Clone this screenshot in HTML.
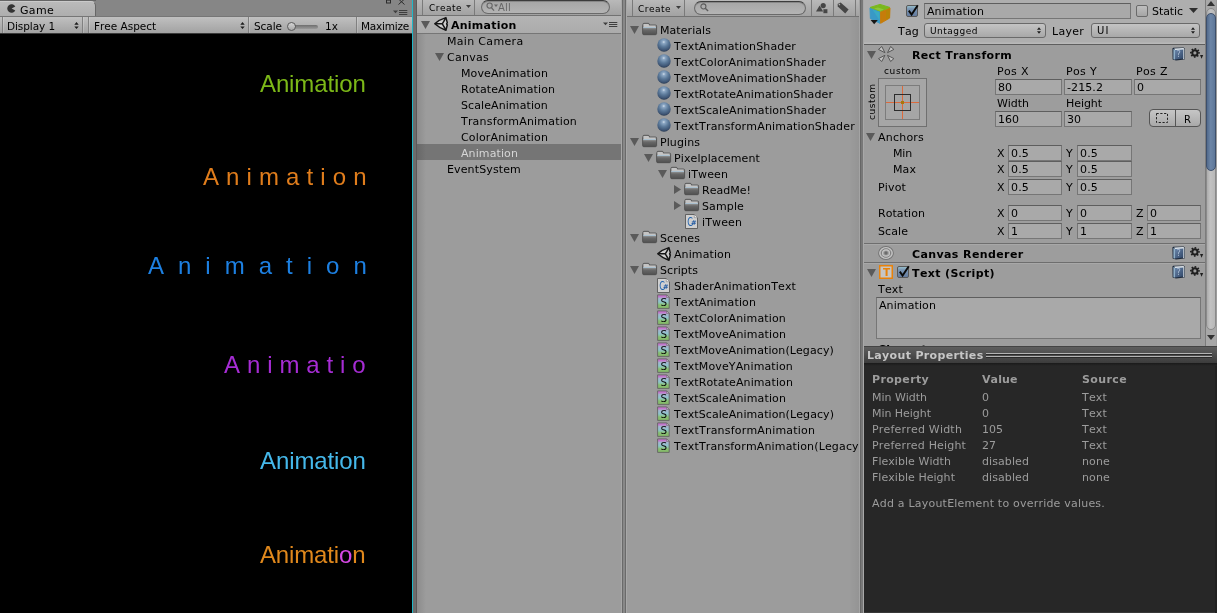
<!DOCTYPE html>
<html>
<head>
<meta charset="utf-8">
<title>Unity Editor</title>
<style>
html,body{margin:0;padding:0;}
body{width:1217px;height:613px;overflow:hidden;background:#9c9c9c;position:relative;
  font-family:"DejaVu Sans","Liberation Sans",sans-serif;font-size:11px;color:#000;font-kerning:none;font-variant-ligatures:none;}
div,span{box-sizing:border-box;}
#root{position:absolute;left:0;top:0;width:1217px;height:613px;overflow:hidden;will-change:transform;background:#9c9c9c;}
.abs{position:absolute;}
svg{display:block;overflow:visible;}
.t{position:absolute;white-space:pre;line-height:16px;height:16px;}
.b{font-weight:bold;}
.split{position:absolute;top:0;height:613px;width:6px;background:linear-gradient(90deg,#a8a8a8 0,#a8a8a8 1px,#6a6a6a 1px,#6a6a6a 2px,#888 2px,#888 4px,#6a6a6a 4px,#6a6a6a 5px,#a8a8a8 5px,#a8a8a8 6px);}
.split2{position:absolute;top:0;height:613px;width:5px;background:linear-gradient(90deg,#a4a4a4 0,#a4a4a4 1px,#666 1px,#666 2px,#787878 2px,#787878 4px,#a8a8a8 4px,#a8a8a8 5px);}
.tb{position:absolute;background:linear-gradient(#bcbcbc,#a2a2a2);border-bottom:1px solid #727272;}
.sep{position:absolute;width:1px;background:#7a7a7a;}
.search{position:absolute;border:1px solid #6a6a6a;border-top-color:#3c3c3c;box-shadow:inset 0 1px 0 rgba(0,0,0,.18);border-radius:8px;background:linear-gradient(#a6a6a6,#b4b4b4);}
.fld{position:absolute;height:16px;border:1px solid #767676;border-top-color:#5e5e5e;background:#a9a9a9;}
.dd{position:absolute;height:15px;border:1px solid #6a6a6a;border-radius:3px;background:linear-gradient(#c4c4c4,#a8a8a8);}
.game{font-family:"Liberation Sans",sans-serif;font-size:24px;position:absolute;white-space:pre;line-height:28px;}
.hl{position:absolute;height:1px;}
</style>
</head>
<body>
<div id="root">
<svg width="0" height="0" style="position:absolute">
<defs>
<linearGradient id="gFold" x1="0" y1="0" x2="0" y2="1"><stop offset="0" stop-color="#8a8a8a"/><stop offset="1" stop-color="#505050"/></linearGradient>
<radialGradient id="gBall" cx="0.48" cy="0.28" r="0.72"><stop offset="0" stop-color="#d2deea"/><stop offset="0.16" stop-color="#8ba6c3"/><stop offset="0.5" stop-color="#5b7999"/><stop offset="0.85" stop-color="#3d5473"/><stop offset="1" stop-color="#2a3a52"/></radialGradient>
<linearGradient id="gS" x1="0" y1="0" x2="0" y2="1"><stop offset="0" stop-color="#c46ccc"/><stop offset="0.16" stop-color="#c27ccc"/><stop offset="0.24" stop-color="#a6b4d0"/><stop offset="0.5" stop-color="#8fc4cc"/><stop offset="0.62" stop-color="#8cc4a8"/><stop offset="0.74" stop-color="#88c070"/><stop offset="1" stop-color="#84b868"/></linearGradient>
<linearGradient id="gBook" x1="0" y1="0" x2="1" y2="1"><stop offset="0" stop-color="#6b86aa"/><stop offset="1" stop-color="#2f4566"/></linearGradient>
<linearGradient id="gChk" x1="0" y1="0" x2="0" y2="1"><stop offset="0" stop-color="#9cc4cc"/><stop offset="0.3" stop-color="#7a96b4"/><stop offset="1" stop-color="#62799c"/></linearGradient>
<linearGradient id="gChk0" x1="0" y1="0" x2="0" y2="1"><stop offset="0" stop-color="#c0c0c0"/><stop offset="1" stop-color="#a4a4a4"/></linearGradient>
</defs>
</svg>
<!-- GAME -->
<div class="abs" style="left:0px;top:0px;width:412px;height:613px;background:#000;"></div>
<div class="abs" style="left:0px;top:0px;width:412px;height:17px;background:#868686;"></div>
<div class="abs" style="left:0px;top:0px;width:96px;height:1px;background:#666;"></div>
<div class="abs" style="left:0;top:1px;width:96px;height:16px;background:linear-gradient(#bababa,#adadad);border-top:1px solid #cacaca;border-right:1px solid #666;border-top-right-radius:5px;"></div>
<svg class="abs" style="left:7px;top:4px" width="9" height="9"><path d="M8.3 2.4 A4.3 4.3 0 1 0 8.3 6.6 L4.6 4.5 Z" fill="#333"/></svg>
<div class="t" style="left:20px;top:3px;letter-spacing:0.31px;">Game</div>
<svg class="abs" style="left:386px;top:0" width="22" height="5"><rect x="0.5" y="-0.5" width="4" height="3.5" fill="none" stroke="#2c2c2c"/><rect x="0" y="-1" width="5" height="1.6" fill="#2c2c2c"/><path d="M12.5 -1 L18.5 4.5 M18.5 -1 L12.5 4.5" stroke="#2c2c2c" stroke-width="1" fill="none"/></svg>
<svg class="abs" style="left:393px;top:10px" width="15" height="6" viewBox="0 0 15 6"><path d="M0 0.4 H5 L2.5 3.2 Z" fill="#3e3e3e"/><path d="M6 0 H14.3 V1 H6 Z M6 2 H14.3 V3 H6 Z M6 4 H14.3 V5 H6 Z" fill="#3e3e3e"/></svg>
<div class="abs" style="left:0;top:16px;width:412px;height:18px;background:linear-gradient(#c0c0c0,#a2a2a2);border-top:1px solid #767676;border-bottom:1px solid #3a3a3a;"></div>
<div class="sep" style="left:2px;top:17px;height:16px;background:#808080;"></div>
<div class="sep" style="left:3px;top:17px;height:16px;background:rgba(255,255,255,.18);"></div>
<div class="sep" style="left:82px;top:17px;height:16px;background:#808080;"></div>
<div class="sep" style="left:83px;top:17px;height:16px;background:rgba(255,255,255,.18);"></div>
<div class="sep" style="left:88px;top:17px;height:16px;background:#808080;"></div>
<div class="sep" style="left:89px;top:17px;height:16px;background:rgba(255,255,255,.18);"></div>
<div class="sep" style="left:248px;top:17px;height:16px;background:#808080;"></div>
<div class="sep" style="left:249px;top:17px;height:16px;background:rgba(255,255,255,.18);"></div>
<div class="sep" style="left:356px;top:17px;height:16px;background:#808080;"></div>
<div class="sep" style="left:357px;top:17px;height:16px;background:rgba(255,255,255,.18);"></div>
<div class="t" style="left:7px;top:18px;font-size:10.5px;letter-spacing:-0.08px;">Display 1</div>
<svg class="abs" style="left:74px;top:22px" width="5" height="7" viewBox="0 0 5 8"><path d="M0 3 H5 L2.5 0 Z M0 5 H5 L2.5 8 Z" fill="#1c1c1c"/></svg>
<div class="t" style="left:94px;top:18px;font-size:10.5px;letter-spacing:-0.02px;">Free Aspect</div>
<svg class="abs" style="left:240px;top:22px" width="5" height="7" viewBox="0 0 5 8"><path d="M0 3 H5 L2.5 0 Z M0 5 H5 L2.5 8 Z" fill="#1c1c1c"/></svg>
<div class="t" style="left:254px;top:18px;font-size:10.5px;letter-spacing:-0.05px;">Scale</div>
<div class="abs" style="left:293px;top:25px;width:25px;height:4px;border-radius:2px;background:linear-gradient(#6e6e6e,#9a9a9a);"></div>
<div class="abs" style="left:287px;top:22px;width:9px;height:9px;border-radius:5px;background:linear-gradient(#d4d4d4,#a8a8a8);border:1px solid #5a5a5a;"></div>
<div class="t" style="left:325px;top:18px;font-size:10.5px;letter-spacing:0.05px;">1x</div>
<div class="t" style="left:361px;top:18px;font-size:10.5px;letter-spacing:-0.22px;">Maximize</div>
<div class="game" style="left:260px;top:70px;color:#7cb818;letter-spacing:-0.12px;">Animation</div>
<div class="game" style="left:203px;top:163px;color:#e07d1c;letter-spacing:7.1px;">Animation</div>
<div class="game" style="left:148px;top:252px;color:#1d80e2;letter-spacing:14px;">Animation</div>
<div class="game" style="left:224px;top:351px;color:#a62cd4;letter-spacing:6.9px;">Animatio</div>
<div class="game" style="left:260px;top:447px;color:#45b8ea;letter-spacing:-0.1px;">Animation</div>
<div class="game" style="left:260px;top:541px;color:#e0881c;letter-spacing:-0.15px;">Animati<span style="color:#d648e4">o</span>n</div>
<div class="abs" style="left:412px;top:0px;width:1px;height:613px;background:#20b8c8;"></div>
<div class="abs" style="left:413px;top:0px;width:4px;height:613px;background:#6c6c6c;"></div>
<div class="abs" style="left:416px;top:0px;width:1px;height:613px;background:#5a5a5a;"></div>
<div class="abs" style="left:417px;top:0;width:9px;height:613px;background:linear-gradient(90deg,#8c8c8c,#9c9c9c);"></div>
<!-- HIERARCHY -->
<div class="tb" style="left:417px;top:-2px;width:205px;height:18px;"></div>
<div class="sep" style="left:422px;top:0;height:15px;"></div>
<div class="sep" style="left:474px;top:0;height:15px;"></div>
<div class="t" style="left:429px;top:0px;font-size:9px;letter-spacing:0.48px;">Create</div>
<svg class="abs" style="left:466px;top:5px" width="5" height="3"><path d="M0 0H5L2.5 3Z" fill="#3c3c3c"/></svg>
<div class="search" style="left:481px;top:0;width:129px;height:14px;"></div>
<svg class="abs" style="left:486px;top:2px" width="13" height="10"><circle cx="3.6" cy="3.6" r="2.6" fill="none" stroke="#666" stroke-width="1.1"/><path d="M5.4 5.6 L8 8.6" stroke="#666" stroke-width="1.3"/><path d="M8 2.6 H12 L10 5 Z" fill="#666"/></svg>
<div class="t" style="left:498px;top:0px;font-size:10px;letter-spacing:0.20px;color:#666;">All</div>
<div class="abs" style="left:417px;top:16px;width:205px;height:18px;background:linear-gradient(#b4b4b4,#ababab);border-bottom:1px solid #767676;"></div>
<svg class="abs" style="left:421px;top:21px" width="9" height="8"><path d="M0 0H9L4.5 8Z" fill="#5a5a5a"/></svg>
<svg class="abs" style="left:434px;top:17px" width="14" height="14" viewBox="0 0 14 14"><path d="M0.8 6.8 Q5.2 2.6 11.9 0.6 L13.3 5.6 L12.6 6.8 L13.3 8 L11.9 13.2 Q5.2 11 0.8 6.8 Z" fill="#cfcfcf" stroke="#161616" stroke-width="1.5" stroke-linejoin="round"/><path d="M1.5 6.8 H8.3 M8.3 6.8 L11.7 1.2 M8.3 6.8 L11.7 12.6" stroke="#161616" stroke-width="1.5" fill="none"/></svg>
<div class="t b" style="left:451px;top:18px;letter-spacing:0.23px;">Animation</div>
<svg class="abs" style="left:603px;top:22px" width="15" height="6" viewBox="0 0 15 6"><path d="M0 0.4 H5 L2.5 3.2 Z" fill="#3e3e3e"/><path d="M6 0 H14.3 V1 H6 Z M6 2 H14.3 V3 H6 Z M6 4 H14.3 V5 H6 Z" fill="#3e3e3e"/></svg>
<div class="t" style="left:447px;top:34px;letter-spacing:0.32px;">Main Camera</div>
<svg class="abs" style="left:435px;top:53px" width="9" height="8"><path d="M0 0H9L4.5 8Z" fill="#5a5a5a"/></svg>
<div class="t" style="left:447px;top:50px;letter-spacing:0.27px;">Canvas</div>
<div class="t" style="left:461px;top:66px;letter-spacing:0.11px;">MoveAnimation</div>
<div class="t" style="left:461px;top:82px;letter-spacing:0.10px;">RotateAnimation</div>
<div class="t" style="left:461px;top:98px;letter-spacing:0.09px;">ScaleAnimation</div>
<div class="t" style="left:461px;top:114px;letter-spacing:0.19px;">TransformAnimation</div>
<div class="t" style="left:461px;top:130px;letter-spacing:0.16px;">ColorAnimation</div>
<div class="abs" style="left:417px;top:144px;width:205px;height:16px;background:linear-gradient(90deg,#686868,#757575 9px);"></div>
<div class="t" style="left:461px;top:146px;letter-spacing:0.10px;color:#d6d6d6;">Animation</div>
<div class="t" style="left:447px;top:162px;letter-spacing:0.13px;">EventSystem</div>
<div class="split" style="left:621px"></div>
<!-- PROJECT -->
<div class="tb" style="left:627px;top:-2px;width:233px;height:19px;"></div>
<div class="sep" style="left:632px;top:0;height:16px;"></div>
<div class="sep" style="left:684px;top:0;height:16px;"></div>
<div class="sep" style="left:811px;top:0;height:16px;"></div>
<div class="sep" style="left:833px;top:0;height:16px;"></div>
<div class="sep" style="left:855px;top:0;height:16px;"></div>
<div class="t" style="left:638px;top:1px;font-size:9px;letter-spacing:0.48px;">Create</div>
<svg class="abs" style="left:676px;top:6px" width="5" height="3"><path d="M0 0H5L2.5 3Z" fill="#3c3c3c"/></svg>
<div class="search" style="left:694px;top:1px;width:112px;height:14px;"></div>
<svg class="abs" style="left:700px;top:3px" width="9" height="9" viewBox="0 0 10 10"><circle cx="3.8" cy="3.8" r="2.8" fill="none" stroke="#5c5c5c" stroke-width="1.2"/><path d="M5.8 5.8 L9 9" stroke="#5c5c5c" stroke-width="1.5"/></svg>
<svg class="abs" style="left:816px;top:3px" width="12" height="11"><circle cx="7.2" cy="2.6" r="2.6" fill="#464646"/><path d="M0 8.6 L3.6 2.6 L7.2 8.6 Z" fill="#464646"/><rect x="7.4" y="6.2" width="4" height="4" fill="#464646"/></svg>
<svg class="abs" style="left:837px;top:2px" width="13" height="12"><path d="M0.6 2 L3.6 0.6 L11.6 7.6 L8.2 11.4 L0.8 4.6 Z" fill="#464646"/><circle cx="2.4" cy="2.6" r="0.8" fill="#b0b0b0"/></svg>
<div class="abs" style="left:627px;top:17px;width:233px;height:596px;overflow:hidden">
<svg class="abs" style="left:3px;top:9px" width="9" height="8"><path d="M0 0H9L4.5 8Z" fill="#5a5a5a"/></svg>
<svg class="abs" style="left:15px;top:6px" width="15" height="12" viewBox="0 0 15 12"><path d="M1 1.2 Q1 0.3 2 0.3 H6.2 Q7 0.3 7.3 1.2 L7.6 2 H13.4 Q14.6 2 14.6 3.2 V10.6 Q14.6 11.7 13.4 11.7 H1.8 Q0.6 11.7 0.6 10.6 V2.4 Z" fill="url(#gFold)" stroke="#444" stroke-width="0.7"/><path d="M1.5 1.1 H6.5 L7.1 2.5 H13.7 V4 H1.5 Z" fill="#c4c4c4"/><rect x="1.2" y="4" width="12.8" height="1.1" fill="#a9bfce"/><rect x="1.2" y="5.1" width="12.8" height="1.2" fill="#8f8f8f" opacity="0.7"/></svg>
<div class="t" style="left:33px;top:6px;letter-spacing:0.06px;">Materials</div>
<svg class="abs" style="left:30px;top:21px" width="14" height="14" viewBox="0 0 14 14"><circle cx="7" cy="7" r="6.7" fill="url(#gBall)"/></svg>
<div class="t" style="left:47px;top:22px;letter-spacing:0.14px;">TextAnimationShader</div>
<svg class="abs" style="left:30px;top:37px" width="14" height="14" viewBox="0 0 14 14"><circle cx="7" cy="7" r="6.7" fill="url(#gBall)"/></svg>
<div class="t" style="left:47px;top:38px;letter-spacing:0.16px;">TextColorAnimationShader</div>
<svg class="abs" style="left:30px;top:53px" width="14" height="14" viewBox="0 0 14 14"><circle cx="7" cy="7" r="6.7" fill="url(#gBall)"/></svg>
<div class="t" style="left:47px;top:54px;letter-spacing:0.14px;">TextMoveAnimationShader</div>
<svg class="abs" style="left:30px;top:69px" width="14" height="14" viewBox="0 0 14 14"><circle cx="7" cy="7" r="6.7" fill="url(#gBall)"/></svg>
<div class="t" style="left:47px;top:70px;letter-spacing:0.13px;">TextRotateAnimationShader</div>
<svg class="abs" style="left:30px;top:85px" width="14" height="14" viewBox="0 0 14 14"><circle cx="7" cy="7" r="6.7" fill="url(#gBall)"/></svg>
<div class="t" style="left:47px;top:86px;letter-spacing:0.13px;">TextScaleAnimationShader</div>
<svg class="abs" style="left:30px;top:101px" width="14" height="14" viewBox="0 0 14 14"><circle cx="7" cy="7" r="6.7" fill="url(#gBall)"/></svg>
<div class="t" style="left:47px;top:102px;letter-spacing:0.18px;">TextTransformAnimationShader</div>
<svg class="abs" style="left:3px;top:121px" width="9" height="8"><path d="M0 0H9L4.5 8Z" fill="#5a5a5a"/></svg>
<svg class="abs" style="left:15px;top:118px" width="15" height="12" viewBox="0 0 15 12"><path d="M1 1.2 Q1 0.3 2 0.3 H6.2 Q7 0.3 7.3 1.2 L7.6 2 H13.4 Q14.6 2 14.6 3.2 V10.6 Q14.6 11.7 13.4 11.7 H1.8 Q0.6 11.7 0.6 10.6 V2.4 Z" fill="url(#gFold)" stroke="#444" stroke-width="0.7"/><path d="M1.5 1.1 H6.5 L7.1 2.5 H13.7 V4 H1.5 Z" fill="#c4c4c4"/><rect x="1.2" y="4" width="12.8" height="1.1" fill="#a9bfce"/><rect x="1.2" y="5.1" width="12.8" height="1.2" fill="#8f8f8f" opacity="0.7"/></svg>
<div class="t" style="left:33px;top:118px;letter-spacing:0.09px;">Plugins</div>
<svg class="abs" style="left:17px;top:137px" width="9" height="8"><path d="M0 0H9L4.5 8Z" fill="#5a5a5a"/></svg>
<svg class="abs" style="left:29px;top:134px" width="15" height="12" viewBox="0 0 15 12"><path d="M1 1.2 Q1 0.3 2 0.3 H6.2 Q7 0.3 7.3 1.2 L7.6 2 H13.4 Q14.6 2 14.6 3.2 V10.6 Q14.6 11.7 13.4 11.7 H1.8 Q0.6 11.7 0.6 10.6 V2.4 Z" fill="url(#gFold)" stroke="#444" stroke-width="0.7"/><path d="M1.5 1.1 H6.5 L7.1 2.5 H13.7 V4 H1.5 Z" fill="#c4c4c4"/><rect x="1.2" y="4" width="12.8" height="1.1" fill="#a9bfce"/><rect x="1.2" y="5.1" width="12.8" height="1.2" fill="#8f8f8f" opacity="0.7"/></svg>
<div class="t" style="left:47px;top:134px;letter-spacing:0.11px;">Pixelplacement</div>
<svg class="abs" style="left:31px;top:153px" width="9" height="8"><path d="M0 0H9L4.5 8Z" fill="#5a5a5a"/></svg>
<svg class="abs" style="left:43px;top:150px" width="15" height="12" viewBox="0 0 15 12"><path d="M1 1.2 Q1 0.3 2 0.3 H6.2 Q7 0.3 7.3 1.2 L7.6 2 H13.4 Q14.6 2 14.6 3.2 V10.6 Q14.6 11.7 13.4 11.7 H1.8 Q0.6 11.7 0.6 10.6 V2.4 Z" fill="url(#gFold)" stroke="#444" stroke-width="0.7"/><path d="M1.5 1.1 H6.5 L7.1 2.5 H13.7 V4 H1.5 Z" fill="#c4c4c4"/><rect x="1.2" y="4" width="12.8" height="1.1" fill="#a9bfce"/><rect x="1.2" y="5.1" width="12.8" height="1.2" fill="#8f8f8f" opacity="0.7"/></svg>
<div class="t" style="left:61px;top:150px;letter-spacing:0.12px;">iTween</div>
<svg class="abs" style="left:47px;top:168px" width="7" height="9"><path d="M0 0V9L7 4.5Z" fill="#5a5a5a"/></svg>
<svg class="abs" style="left:57px;top:166px" width="15" height="12" viewBox="0 0 15 12"><path d="M1 1.2 Q1 0.3 2 0.3 H6.2 Q7 0.3 7.3 1.2 L7.6 2 H13.4 Q14.6 2 14.6 3.2 V10.6 Q14.6 11.7 13.4 11.7 H1.8 Q0.6 11.7 0.6 10.6 V2.4 Z" fill="url(#gFold)" stroke="#444" stroke-width="0.7"/><path d="M1.5 1.1 H6.5 L7.1 2.5 H13.7 V4 H1.5 Z" fill="#c4c4c4"/><rect x="1.2" y="4" width="12.8" height="1.1" fill="#a9bfce"/><rect x="1.2" y="5.1" width="12.8" height="1.2" fill="#8f8f8f" opacity="0.7"/></svg>
<div class="t" style="left:75px;top:166px;letter-spacing:0.03px;">ReadMe!</div>
<svg class="abs" style="left:47px;top:184px" width="7" height="9"><path d="M0 0V9L7 4.5Z" fill="#5a5a5a"/></svg>
<svg class="abs" style="left:57px;top:182px" width="15" height="12" viewBox="0 0 15 12"><path d="M1 1.2 Q1 0.3 2 0.3 H6.2 Q7 0.3 7.3 1.2 L7.6 2 H13.4 Q14.6 2 14.6 3.2 V10.6 Q14.6 11.7 13.4 11.7 H1.8 Q0.6 11.7 0.6 10.6 V2.4 Z" fill="url(#gFold)" stroke="#444" stroke-width="0.7"/><path d="M1.5 1.1 H6.5 L7.1 2.5 H13.7 V4 H1.5 Z" fill="#c4c4c4"/><rect x="1.2" y="4" width="12.8" height="1.1" fill="#a9bfce"/><rect x="1.2" y="5.1" width="12.8" height="1.2" fill="#8f8f8f" opacity="0.7"/></svg>
<div class="t" style="left:75px;top:182px;letter-spacing:0.12px;">Sample</div>
<svg class="abs" style="left:58px;top:197px" width="13" height="15" viewBox="0 0 13 15"><path d="M0.5 0.5 H9.3 L12.5 3.7 V14.5 H0.5 Z" fill="#d0d0d0" stroke="#585858" stroke-width="0.9"/><path d="M9.3 0.5 V3.7 H12.5" fill="#ececec" stroke="#6a6a6a" stroke-width="0.5"/><text x="2.2" y="12.2" font-family="DejaVu Sans, sans-serif" font-size="11.5" textLength="5.6" lengthAdjust="spacingAndGlyphs" fill="#1f62ae">C</text><text x="5.9" y="10.6" font-family="DejaVu Sans, sans-serif" font-weight="bold" font-size="6.6" fill="#2058a0">#</text></svg>
<div class="t" style="left:75px;top:198px;letter-spacing:0.12px;">iTween</div>
<svg class="abs" style="left:3px;top:217px" width="9" height="8"><path d="M0 0H9L4.5 8Z" fill="#5a5a5a"/></svg>
<svg class="abs" style="left:15px;top:214px" width="15" height="12" viewBox="0 0 15 12"><path d="M1 1.2 Q1 0.3 2 0.3 H6.2 Q7 0.3 7.3 1.2 L7.6 2 H13.4 Q14.6 2 14.6 3.2 V10.6 Q14.6 11.7 13.4 11.7 H1.8 Q0.6 11.7 0.6 10.6 V2.4 Z" fill="url(#gFold)" stroke="#444" stroke-width="0.7"/><path d="M1.5 1.1 H6.5 L7.1 2.5 H13.7 V4 H1.5 Z" fill="#c4c4c4"/><rect x="1.2" y="4" width="12.8" height="1.1" fill="#a9bfce"/><rect x="1.2" y="5.1" width="12.8" height="1.2" fill="#8f8f8f" opacity="0.7"/></svg>
<div class="t" style="left:33px;top:214px;letter-spacing:0.12px;">Scenes</div>
<svg class="abs" style="left:30px;top:230px" width="14" height="14" viewBox="0 0 14 14"><path d="M0.8 6.8 Q5.2 2.6 11.9 0.6 L13.3 5.6 L12.6 6.8 L13.3 8 L11.9 13.2 Q5.2 11 0.8 6.8 Z" fill="#cfcfcf" stroke="#161616" stroke-width="1.5" stroke-linejoin="round"/><path d="M1.5 6.8 H8.3 M8.3 6.8 L11.7 1.2 M8.3 6.8 L11.7 12.6" stroke="#161616" stroke-width="1.5" fill="none"/></svg>
<div class="t" style="left:47px;top:230px;letter-spacing:0.10px;">Animation</div>
<svg class="abs" style="left:3px;top:249px" width="9" height="8"><path d="M0 0H9L4.5 8Z" fill="#5a5a5a"/></svg>
<svg class="abs" style="left:15px;top:246px" width="15" height="12" viewBox="0 0 15 12"><path d="M1 1.2 Q1 0.3 2 0.3 H6.2 Q7 0.3 7.3 1.2 L7.6 2 H13.4 Q14.6 2 14.6 3.2 V10.6 Q14.6 11.7 13.4 11.7 H1.8 Q0.6 11.7 0.6 10.6 V2.4 Z" fill="url(#gFold)" stroke="#444" stroke-width="0.7"/><path d="M1.5 1.1 H6.5 L7.1 2.5 H13.7 V4 H1.5 Z" fill="#c4c4c4"/><rect x="1.2" y="4" width="12.8" height="1.1" fill="#a9bfce"/><rect x="1.2" y="5.1" width="12.8" height="1.2" fill="#8f8f8f" opacity="0.7"/></svg>
<div class="t" style="left:33px;top:246px;letter-spacing:0.05px;">Scripts</div>
<svg class="abs" style="left:30px;top:261px" width="13" height="15" viewBox="0 0 13 15"><path d="M0.5 0.5 H9.3 L12.5 3.7 V14.5 H0.5 Z" fill="#d0d0d0" stroke="#585858" stroke-width="0.9"/><path d="M9.3 0.5 V3.7 H12.5" fill="#ececec" stroke="#6a6a6a" stroke-width="0.5"/><text x="2.2" y="12.2" font-family="DejaVu Sans, sans-serif" font-size="11.5" textLength="5.6" lengthAdjust="spacingAndGlyphs" fill="#1f62ae">C</text><text x="5.9" y="10.6" font-family="DejaVu Sans, sans-serif" font-weight="bold" font-size="6.6" fill="#2058a0">#</text></svg>
<div class="t" style="left:47px;top:262px;letter-spacing:0.14px;">ShaderAnimationText</div>
<svg class="abs" style="left:30px;top:277px" width="13" height="15" viewBox="0 0 13 15"><path d="M0.6 0.9 H9.6 L12.2 3.5 V14.4 H0.6 Z" fill="url(#gS)" stroke="#636363" stroke-width="0.9"/><path d="M9.6 0.9 V3.5 H12.2 Z" fill="#c9b6d2" stroke="#636363" stroke-width="0.5"/><text x="3.5" y="12.3" font-family="DejaVu Sans, sans-serif" font-size="10.4" fill="#0c0c0c">S</text></svg>
<div class="t" style="left:47px;top:278px;letter-spacing:0.13px;">TextAnimation</div>
<svg class="abs" style="left:30px;top:293px" width="13" height="15" viewBox="0 0 13 15"><path d="M0.6 0.9 H9.6 L12.2 3.5 V14.4 H0.6 Z" fill="url(#gS)" stroke="#636363" stroke-width="0.9"/><path d="M9.6 0.9 V3.5 H12.2 Z" fill="#c9b6d2" stroke="#636363" stroke-width="0.5"/><text x="3.5" y="12.3" font-family="DejaVu Sans, sans-serif" font-size="10.4" fill="#0c0c0c">S</text></svg>
<div class="t" style="left:47px;top:294px;letter-spacing:0.16px;">TextColorAnimation</div>
<svg class="abs" style="left:30px;top:309px" width="13" height="15" viewBox="0 0 13 15"><path d="M0.6 0.9 H9.6 L12.2 3.5 V14.4 H0.6 Z" fill="url(#gS)" stroke="#636363" stroke-width="0.9"/><path d="M9.6 0.9 V3.5 H12.2 Z" fill="#c9b6d2" stroke="#636363" stroke-width="0.5"/><text x="3.5" y="12.3" font-family="DejaVu Sans, sans-serif" font-size="10.4" fill="#0c0c0c">S</text></svg>
<div class="t" style="left:47px;top:310px;letter-spacing:0.13px;">TextMoveAnimation</div>
<svg class="abs" style="left:30px;top:325px" width="13" height="15" viewBox="0 0 13 15"><path d="M0.6 0.9 H9.6 L12.2 3.5 V14.4 H0.6 Z" fill="url(#gS)" stroke="#636363" stroke-width="0.9"/><path d="M9.6 0.9 V3.5 H12.2 Z" fill="#c9b6d2" stroke="#636363" stroke-width="0.5"/><text x="3.5" y="12.3" font-family="DejaVu Sans, sans-serif" font-size="10.4" fill="#0c0c0c">S</text></svg>
<div class="t" style="left:47px;top:326px;letter-spacing:0.09px;">TextMoveAnimation(Legacy)</div>
<svg class="abs" style="left:30px;top:341px" width="13" height="15" viewBox="0 0 13 15"><path d="M0.6 0.9 H9.6 L12.2 3.5 V14.4 H0.6 Z" fill="url(#gS)" stroke="#636363" stroke-width="0.9"/><path d="M9.6 0.9 V3.5 H12.2 Z" fill="#c9b6d2" stroke="#636363" stroke-width="0.5"/><text x="3.5" y="12.3" font-family="DejaVu Sans, sans-serif" font-size="10.4" fill="#0c0c0c">S</text></svg>
<div class="t" style="left:47px;top:342px;letter-spacing:0.13px;">TextMoveYAnimation</div>
<svg class="abs" style="left:30px;top:357px" width="13" height="15" viewBox="0 0 13 15"><path d="M0.6 0.9 H9.6 L12.2 3.5 V14.4 H0.6 Z" fill="url(#gS)" stroke="#636363" stroke-width="0.9"/><path d="M9.6 0.9 V3.5 H12.2 Z" fill="#c9b6d2" stroke="#636363" stroke-width="0.5"/><text x="3.5" y="12.3" font-family="DejaVu Sans, sans-serif" font-size="10.4" fill="#0c0c0c">S</text></svg>
<div class="t" style="left:47px;top:358px;letter-spacing:0.11px;">TextRotateAnimation</div>
<svg class="abs" style="left:30px;top:373px" width="13" height="15" viewBox="0 0 13 15"><path d="M0.6 0.9 H9.6 L12.2 3.5 V14.4 H0.6 Z" fill="url(#gS)" stroke="#636363" stroke-width="0.9"/><path d="M9.6 0.9 V3.5 H12.2 Z" fill="#c9b6d2" stroke="#636363" stroke-width="0.5"/><text x="3.5" y="12.3" font-family="DejaVu Sans, sans-serif" font-size="10.4" fill="#0c0c0c">S</text></svg>
<div class="t" style="left:47px;top:374px;letter-spacing:0.11px;">TextScaleAnimation</div>
<svg class="abs" style="left:30px;top:389px" width="13" height="15" viewBox="0 0 13 15"><path d="M0.6 0.9 H9.6 L12.2 3.5 V14.4 H0.6 Z" fill="url(#gS)" stroke="#636363" stroke-width="0.9"/><path d="M9.6 0.9 V3.5 H12.2 Z" fill="#c9b6d2" stroke="#636363" stroke-width="0.5"/><text x="3.5" y="12.3" font-family="DejaVu Sans, sans-serif" font-size="10.4" fill="#0c0c0c">S</text></svg>
<div class="t" style="left:47px;top:390px;letter-spacing:0.09px;">TextScaleAnimation(Legacy)</div>
<svg class="abs" style="left:30px;top:405px" width="13" height="15" viewBox="0 0 13 15"><path d="M0.6 0.9 H9.6 L12.2 3.5 V14.4 H0.6 Z" fill="url(#gS)" stroke="#636363" stroke-width="0.9"/><path d="M9.6 0.9 V3.5 H12.2 Z" fill="#c9b6d2" stroke="#636363" stroke-width="0.5"/><text x="3.5" y="12.3" font-family="DejaVu Sans, sans-serif" font-size="10.4" fill="#0c0c0c">S</text></svg>
<div class="t" style="left:47px;top:406px;letter-spacing:0.19px;">TextTransformAnimation</div>
<svg class="abs" style="left:30px;top:421px" width="13" height="15" viewBox="0 0 13 15"><path d="M0.6 0.9 H9.6 L12.2 3.5 V14.4 H0.6 Z" fill="url(#gS)" stroke="#636363" stroke-width="0.9"/><path d="M9.6 0.9 V3.5 H12.2 Z" fill="#c9b6d2" stroke="#636363" stroke-width="0.5"/><text x="3.5" y="12.3" font-family="DejaVu Sans, sans-serif" font-size="10.4" fill="#0c0c0c">S</text></svg>
<div class="t" style="left:47px;top:422px;letter-spacing:0.15px;">TextTransformAnimation(Legacy)</div>
</div>
<div class="abs" style="left:849px;top:17px;width:10px;height:596px;background:linear-gradient(90deg,rgba(0,0,0,0),rgba(0,0,0,.05));"></div>
<div class="split2" style="left:859px"></div>
<!-- INSPECTOR -->
<div class="abs" style="left:864px;top:0;width:353px;height:346px;overflow:hidden;background:#9d9d9d">
<div class="abs" style="left:0;top:0;width:341px;height:45px;background:linear-gradient(#aeaeae 0,#aeaeae 42px,#b8b8b8 43px);border-bottom:1px solid #5e5e5e;"></div>
<svg class="abs" style="left:5px;top:3px" width="22" height="22"><g stroke-linejoin="round" stroke-width="1"><path d="M1 4.9 L11 8.7 L11 20.3 L1.4 15.6 Z" fill="#3899c6" stroke="#3899c6"/><path d="M3.5 6.4 L10.6 9.2 L10.6 17.5 Z" fill="#39aac4"/><path d="M11.6 8.7 L21 4.9 L20.6 15.1 L11.6 20.3 Z" fill="#c67c0a" stroke="#c67c0a"/><path d="M17 7 L20.8 5.4 L20.5 14.8 L17 16.8 Z" fill="#b88406"/><path d="M1.2 4.4 L11 1.4 L20.8 4.4 L11.3 8.2 Z" fill="#7ab81c" stroke="#7ab81c"/><path d="M5 5.6 L11.2 7.9 L15 6.4 L9 4.6 Z" fill="#8cc63c"/></g><path d="M1.6 17 H8.8 L5.2 21.2 Z" fill="#161616"/></svg>
<svg class="abs" style="left:42px;top:4px" width="13" height="13" viewBox="0 0 13 13"><rect x="0.5" y="1.5" width="11" height="11" rx="1.5" fill="url(#gChk)" stroke="#585858"/><path d="M2.8 6.6 L5.6 10.6 L11.8 1.2" fill="none" stroke="#0a0a0a" stroke-width="1.9"/></svg>
<div class="fld" style="left:60px;top:3px;width:207px;height:16px;"></div>
<div class="t" style="left:63px;top:4px;letter-spacing:0.10px;">Animation</div>
<svg class="abs" style="left:272px;top:4px" width="13" height="13" viewBox="0 0 13 13"><rect x="0.5" y="1.5" width="11" height="11" rx="1.5" fill="url(#gChk0)" stroke="#6a6a6a"/></svg>
<div class="t" style="left:288px;top:4px;letter-spacing:-0.07px;">Static</div>
<svg class="abs" style="left:325px;top:8px" width="9" height="5"><path d="M0 0H9L4.5 5Z" fill="#2e2e2e"/></svg>
<div class="t" style="left:34px;top:24px;letter-spacing:0.19px;">Tag</div>
<div class="dd" style="left:60px;top:23px;width:122px;height:15px;"></div>
<div class="t" style="left:66px;top:23px;font-size:9px;letter-spacing:0.50px;">Untagged</div>
<svg class="abs" style="left:173px;top:27px" width="4" height="7" viewBox="0 0 5 8"><path d="M0 3 H5 L2.5 0 Z M0 5 H5 L2.5 8 Z" fill="#1c1c1c"/></svg>
<div class="t" style="left:188px;top:24px;letter-spacing:0.27px;">Layer</div>
<div class="dd" style="left:227px;top:23px;width:109px;height:15px;"></div>
<div class="t" style="left:233px;top:23px;font-size:10px;letter-spacing:1.12px;">UI</div>
<svg class="abs" style="left:327px;top:27px" width="4" height="7" viewBox="0 0 5 8"><path d="M0 3 H5 L2.5 0 Z M0 5 H5 L2.5 8 Z" fill="#1c1c1c"/></svg>
<svg class="abs" style="left:3px;top:51px" width="9" height="8"><path d="M0 0H9L4.5 8Z" fill="#5a5a5a"/></svg>
<svg class="abs" style="left:14px;top:46px" width="17" height="16"><g fill="#c2c2c2" stroke="#565656" stroke-width="1" stroke-linejoin="round"><path d="M6.9 6.7 L0.5 3.4 L3.8 0.5 Z"/><path d="M9.5 6.7 L15.9 3.4 L12.6 0.5 Z"/><path d="M6.9 9.3 L0.5 12.6 L3.8 15.5 Z"/><path d="M9.5 9.3 L15.9 12.6 L12.6 15.5 Z"/></g></svg>
<div class="t b" style="left:48px;top:48px;letter-spacing:0.32px;">Rect Transform</div>
<svg class="abs" style="left:308px;top:47px" width="13" height="14" viewBox="0 0 13 14"><path d="M1.2 0.8 L11.6 0.5 L12.6 1.2 V12.6 L4 13.6 L0.6 12.4 L0.4 1.6 Z" fill="#1e2a3c"/><path d="M2.2 1.4 L11.4 1 L12 1.6 V3 L3 3.2 Z" fill="#dfe5ea"/><path d="M11 2 H12.2 V12 L11 12.2 Z" fill="#c8d0d8"/><path d="M1.4 2 L3 2.8 V12.8 L1.4 12 Z" fill="#8fb0c8"/><path d="M3 2.9 L11.2 2.6 V11.4 L3 12.6 Z" fill="url(#gBook)"/><text x="4.6" y="10.2" font-family="DejaVu Sans, sans-serif" font-size="8" fill="#aebfd6">?</text></svg>
<svg class="abs" style="left:326px;top:48px" width="14" height="12" viewBox="0 0 14 12"><circle cx="4.9" cy="4.9" r="4.05" fill="none" stroke="#1e1e1e" stroke-width="1.7" stroke-dasharray="1.5 1.681" transform="rotate(-10.6 4.9 4.9)"/><circle cx="4.9" cy="4.9" r="2.6" fill="none" stroke="#1e1e1e" stroke-width="2"/><path d="M10 7 H13.2 L11.6 10.8 Z" fill="#1e1e1e"/></svg>
<div class="t" style="left:20px;top:63px;font-size:9px;letter-spacing:0.64px;">custom</div>
<div class="abs" style="left:0px;top:94px;width:16px;height:16px;transform:rotate(-90deg);"><span class="t" style="left:-10px;top:0;font-size:9px;letter-spacing:0.55px;">custom</span></div>
<div class="abs" style="left:14px;top:78px;width:49px;height:49px;border:1px solid #707070;background:#a6a6a6;"></div>
<div class="abs" style="left:21px;top:85px;width:35px;height:35px;border:1px solid #7c7c7c;"></div>
<div class="abs" style="left:22px;top:102px;width:33px;height:1px;background:#dc6a3c;"></div>
<div class="abs" style="left:38px;top:86px;width:1px;height:33px;background:#dc6a3c;"></div>
<div class="abs" style="left:30px;top:94px;width:17px;height:17px;border:1px solid #2c2c2c;"></div>
<div class="abs" style="left:37px;top:101px;width:3px;height:3px;background:#a8780c;"></div>
<div class="t" style="left:133px;top:64px;letter-spacing:0.38px;">Pos X</div>
<div class="t" style="left:202px;top:64px;letter-spacing:0.34px;">Pos Y</div>
<div class="t" style="left:272px;top:64px;letter-spacing:0.38px;">Pos Z</div>
<div class="fld" style="left:131px;top:79px;width:67px;height:16px;"></div>
<div class="t" style="left:134px;top:80px;">80</div>
<div class="fld" style="left:200px;top:79px;width:68px;height:16px;"></div>
<div class="t" style="left:203px;top:80px;letter-spacing:0.09px;">-215.2</div>
<div class="fld" style="left:270px;top:79px;width:67px;height:16px;"></div>
<div class="t" style="left:273px;top:80px;">0</div>
<div class="t" style="left:133px;top:96px;letter-spacing:-0.04px;">Width</div>
<div class="t" style="left:202px;top:96px;letter-spacing:-0.06px;">Height</div>
<div class="fld" style="left:131px;top:111px;width:67px;height:16px;"></div>
<div class="t" style="left:134px;top:112px;">160</div>
<div class="fld" style="left:200px;top:111px;width:68px;height:16px;"></div>
<div class="t" style="left:203px;top:112px;">30</div>
<div class="abs" style="left:285px;top:109px;width:52px;height:18px;border:1px solid #555;border-radius:4px;background:linear-gradient(#c6c6c6,#a9a9a9);"></div>
<div class="abs" style="left:311px;top:110px;width:1px;height:16px;background:#555;"></div>
<svg class="abs" style="left:292px;top:113px" width="12" height="10"><rect x="0.5" y="0.5" width="11" height="9" fill="none" stroke="#222" stroke-dasharray="2.2 1.6"/></svg>
<div class="t" style="left:320px;top:112px;font-size:10px;letter-spacing:0.05px;">R</div>
<svg class="abs" style="left:2px;top:133px" width="9" height="8"><path d="M0 0H9L4.5 8Z" fill="#5a5a5a"/></svg>
<div class="t" style="left:14px;top:130px;letter-spacing:0.22px;">Anchors</div>
<div class="t" style="left:29px;top:146px;letter-spacing:-0.17px;">Min</div>
<div class="t" style="left:133px;top:146px;letter-spacing:0.46px;">X</div>
<div class="fld" style="left:144px;top:145px;width:54px;height:16px;"></div>
<div class="t" style="left:147px;top:146px;letter-spacing:0.17px;">0.5</div>
<div class="t" style="left:202px;top:146px;letter-spacing:0.28px;">Y</div>
<div class="fld" style="left:213px;top:145px;width:55px;height:16px;"></div>
<div class="t" style="left:216px;top:146px;letter-spacing:0.17px;">0.5</div>
<div class="t" style="left:29px;top:162px;letter-spacing:0.09px;">Max</div>
<div class="t" style="left:133px;top:162px;letter-spacing:0.46px;">X</div>
<div class="fld" style="left:144px;top:161px;width:54px;height:16px;"></div>
<div class="t" style="left:147px;top:162px;letter-spacing:0.17px;">0.5</div>
<div class="t" style="left:202px;top:162px;letter-spacing:0.28px;">Y</div>
<div class="fld" style="left:213px;top:161px;width:55px;height:16px;"></div>
<div class="t" style="left:216px;top:162px;letter-spacing:0.17px;">0.5</div>
<div class="t" style="left:14px;top:180px;letter-spacing:0.15px;">Pivot</div>
<div class="t" style="left:133px;top:180px;letter-spacing:0.46px;">X</div>
<div class="fld" style="left:144px;top:179px;width:54px;height:16px;"></div>
<div class="t" style="left:147px;top:180px;letter-spacing:0.17px;">0.5</div>
<div class="t" style="left:202px;top:180px;letter-spacing:0.28px;">Y</div>
<div class="fld" style="left:213px;top:179px;width:55px;height:16px;"></div>
<div class="t" style="left:216px;top:180px;letter-spacing:0.17px;">0.5</div>
<div class="t" style="left:14px;top:206px;letter-spacing:0.06px;">Rotation</div>
<div class="t" style="left:133px;top:206px;letter-spacing:0.46px;">X</div>
<div class="fld" style="left:144px;top:205px;width:54px;height:16px;"></div>
<div class="t" style="left:147px;top:206px;">0</div>
<div class="t" style="left:202px;top:206px;letter-spacing:0.28px;">Y</div>
<div class="fld" style="left:213px;top:205px;width:55px;height:16px;"></div>
<div class="t" style="left:216px;top:206px;">0</div>
<div class="t" style="left:272px;top:206px;letter-spacing:0.46px;">Z</div>
<div class="fld" style="left:283px;top:205px;width:54px;height:16px;"></div>
<div class="t" style="left:286px;top:206px;">0</div>
<div class="t" style="left:14px;top:224px;letter-spacing:0.08px;">Scale</div>
<div class="t" style="left:133px;top:224px;letter-spacing:0.46px;">X</div>
<div class="fld" style="left:144px;top:223px;width:54px;height:16px;"></div>
<div class="t" style="left:147px;top:224px;">1</div>
<div class="t" style="left:202px;top:224px;letter-spacing:0.28px;">Y</div>
<div class="fld" style="left:213px;top:223px;width:55px;height:16px;"></div>
<div class="t" style="left:216px;top:224px;">1</div>
<div class="t" style="left:272px;top:224px;letter-spacing:0.46px;">Z</div>
<div class="fld" style="left:283px;top:223px;width:54px;height:16px;"></div>
<div class="t" style="left:286px;top:224px;">1</div>
<div class="abs" style="left:0px;top:243px;width:341px;height:1px;background:#6e6e6e;"></div>
<div class="abs" style="left:0px;top:244px;width:341px;height:1px;background:#a8a8a8;"></div>
<svg class="abs" style="left:14px;top:246px" width="16" height="14"><ellipse cx="8" cy="7" rx="7.3" ry="6.4" fill="none" stroke="#747474" stroke-width="1.1"/><ellipse cx="8" cy="7" rx="6.2" ry="5.3" fill="none" stroke="#c4c4c4" stroke-width="1.2"/><ellipse cx="8" cy="7" rx="4.6" ry="4.2" fill="none" stroke="#808080" stroke-width="1"/><ellipse cx="8" cy="7" rx="3.5" ry="3.2" fill="none" stroke="#c4c4c4" stroke-width="1.2"/><circle cx="8" cy="7" r="1.7" fill="#6c6c6c"/></svg>
<div class="t b" style="left:48px;top:247px;letter-spacing:0.39px;">Canvas Renderer</div>
<svg class="abs" style="left:308px;top:246px" width="13" height="14" viewBox="0 0 13 14"><path d="M1.2 0.8 L11.6 0.5 L12.6 1.2 V12.6 L4 13.6 L0.6 12.4 L0.4 1.6 Z" fill="#1e2a3c"/><path d="M2.2 1.4 L11.4 1 L12 1.6 V3 L3 3.2 Z" fill="#dfe5ea"/><path d="M11 2 H12.2 V12 L11 12.2 Z" fill="#c8d0d8"/><path d="M1.4 2 L3 2.8 V12.8 L1.4 12 Z" fill="#8fb0c8"/><path d="M3 2.9 L11.2 2.6 V11.4 L3 12.6 Z" fill="url(#gBook)"/><text x="4.6" y="10.2" font-family="DejaVu Sans, sans-serif" font-size="8" fill="#aebfd6">?</text></svg>
<svg class="abs" style="left:326px;top:247px" width="14" height="12" viewBox="0 0 14 12"><circle cx="4.9" cy="4.9" r="4.05" fill="none" stroke="#1e1e1e" stroke-width="1.7" stroke-dasharray="1.5 1.681" transform="rotate(-10.6 4.9 4.9)"/><circle cx="4.9" cy="4.9" r="2.6" fill="none" stroke="#1e1e1e" stroke-width="2"/><path d="M10 7 H13.2 L11.6 10.8 Z" fill="#1e1e1e"/></svg>
<div class="abs" style="left:0px;top:262px;width:341px;height:1px;background:#6e6e6e;"></div>
<div class="abs" style="left:0px;top:263px;width:341px;height:1px;background:#a8a8a8;"></div>
<svg class="abs" style="left:3px;top:269px" width="9" height="8"><path d="M0 0H9L4.5 8Z" fill="#5a5a5a"/></svg>
<svg class="abs" style="left:15px;top:265px" width="14" height="14"><rect x="0.75" y="0.75" width="12.5" height="12.5" fill="#c6c6c6" stroke="#e8820a" stroke-width="1.5"/><text x="3.9" y="11.1" font-family="DejaVu Sans, sans-serif" font-weight="bold" font-size="10.5" fill="#e8820a">T</text></svg>
<svg class="abs" style="left:33px;top:265px" width="13" height="13" viewBox="0 0 13 13"><rect x="0.5" y="1.5" width="11" height="11" rx="1.5" fill="url(#gChk)" stroke="#585858"/><path d="M2.8 6.6 L5.6 10.6 L11.8 1.2" fill="none" stroke="#0a0a0a" stroke-width="1.9"/></svg>
<div class="t b" style="left:48px;top:266px;letter-spacing:0.39px;">Text (Script)</div>
<svg class="abs" style="left:308px;top:265px" width="13" height="14" viewBox="0 0 13 14"><path d="M1.2 0.8 L11.6 0.5 L12.6 1.2 V12.6 L4 13.6 L0.6 12.4 L0.4 1.6 Z" fill="#1e2a3c"/><path d="M2.2 1.4 L11.4 1 L12 1.6 V3 L3 3.2 Z" fill="#dfe5ea"/><path d="M11 2 H12.2 V12 L11 12.2 Z" fill="#c8d0d8"/><path d="M1.4 2 L3 2.8 V12.8 L1.4 12 Z" fill="#8fb0c8"/><path d="M3 2.9 L11.2 2.6 V11.4 L3 12.6 Z" fill="url(#gBook)"/><text x="4.6" y="10.2" font-family="DejaVu Sans, sans-serif" font-size="8" fill="#aebfd6">?</text></svg>
<svg class="abs" style="left:326px;top:266px" width="14" height="12" viewBox="0 0 14 12"><circle cx="4.9" cy="4.9" r="4.05" fill="none" stroke="#1e1e1e" stroke-width="1.7" stroke-dasharray="1.5 1.681" transform="rotate(-10.6 4.9 4.9)"/><circle cx="4.9" cy="4.9" r="2.6" fill="none" stroke="#1e1e1e" stroke-width="2"/><path d="M10 7 H13.2 L11.6 10.8 Z" fill="#1e1e1e"/></svg>
<div class="t" style="left:14px;top:282px;letter-spacing:0.18px;">Text</div>
<div class="fld" style="left:12px;top:297px;width:325px;height:42px;"></div>
<div class="t" style="left:15px;top:298px;letter-spacing:0.10px;">Animation</div>
<div class="t b" style="left:14px;top:342px;letter-spacing:0.13px;">Character</div>
<div class="abs" style="left:341px;top:0;width:11px;height:346px;background:#a8a8a8;border-left:1px solid #7c7c7c;"></div>
<svg class="abs" style="left:343px;top:1px" width="8" height="5"><path d="M0 5 H8 L4 0 Z" fill="#333"/></svg>
<div class="abs" style="left:342px;top:8px;width:10px;height:322px;border-radius:5px;background:linear-gradient(90deg,#acacac,#c2c2c2 40%,#b8b8b8);border:1px solid #8a8a8a;"></div>
<div class="abs" style="left:342px;top:13px;width:10px;height:158px;border-radius:5px;background:linear-gradient(90deg,#526a8c,#6c85a6 45%,#5e7798);border:1px solid #3d4f6b;"></div>
<svg class="abs" style="left:343px;top:335px" width="8" height="5"><path d="M0 0 H8 L4 5 Z" fill="#333"/></svg>
</div>
<!-- LAYOUT PROPERTIES -->
<div class="abs" style="left:864px;top:346px;width:353px;height:267px;background:#272727;"></div>
<div class="abs" style="left:864px;top:612px;width:353px;height:1px;background:#383838;"></div>
<div class="abs" style="left:1215px;top:363px;width:2px;height:250px;background:#212121;"></div>
<div class="abs" style="left:864px;top:346px;width:353px;height:17px;background:linear-gradient(#444 0,#444 1px,#5e5e5e 1px,#3c3c3c 100%);"></div>
<div class="abs" style="left:864px;top:363px;width:353px;height:3px;background:linear-gradient(#1a1a1a,#272727);"></div>
<div class="t b" style="left:867px;top:348px;letter-spacing:0.33px;color:#c6c6c6;">Layout Properties</div>
<div class="abs" style="left:986px;top:353px;width:226px;height:1px;background:#b4b4b4;"></div>
<div class="abs" style="left:986px;top:354px;width:226px;height:1px;background:#2a2a2a;"></div>
<div class="abs" style="left:986px;top:356px;width:226px;height:1px;background:#b4b4b4;"></div>
<div class="abs" style="left:986px;top:357px;width:226px;height:1px;background:#2a2a2a;"></div>
<div class="t b" style="left:872px;top:372px;letter-spacing:0.35px;color:#9c9c9c;">Property</div>
<div class="t b" style="left:982px;top:372px;letter-spacing:0.10px;color:#9c9c9c;">Value</div>
<div class="t b" style="left:1082px;top:372px;letter-spacing:0.38px;color:#9c9c9c;">Source</div>
<div class="t" style="left:872px;top:390px;letter-spacing:-0.02px;color:#9c9c9c;">Min Width</div>
<div class="t" style="left:982px;top:390px;color:#9c9c9c;">0</div>
<div class="t" style="left:1082px;top:390px;letter-spacing:0.18px;color:#9c9c9c;">Text</div>
<div class="t" style="left:872px;top:406px;letter-spacing:-0.04px;color:#9c9c9c;">Min Height</div>
<div class="t" style="left:982px;top:406px;color:#9c9c9c;">0</div>
<div class="t" style="left:1082px;top:406px;letter-spacing:0.18px;color:#9c9c9c;">Text</div>
<div class="t" style="left:872px;top:422px;letter-spacing:0.20px;color:#9c9c9c;">Preferred Width</div>
<div class="t" style="left:982px;top:422px;color:#9c9c9c;">105</div>
<div class="t" style="left:1082px;top:422px;letter-spacing:0.18px;color:#9c9c9c;">Text</div>
<div class="t" style="left:872px;top:438px;letter-spacing:0.18px;color:#9c9c9c;">Preferred Height</div>
<div class="t" style="left:982px;top:438px;color:#9c9c9c;">27</div>
<div class="t" style="left:1082px;top:438px;letter-spacing:0.18px;color:#9c9c9c;">Text</div>
<div class="t" style="left:872px;top:454px;letter-spacing:0.05px;color:#9c9c9c;">Flexible Width</div>
<div class="t" style="left:982px;top:454px;letter-spacing:0.09px;color:#9c9c9c;">disabled</div>
<div class="t" style="left:1082px;top:454px;letter-spacing:0.14px;color:#9c9c9c;">none</div>
<div class="t" style="left:872px;top:470px;letter-spacing:0.04px;color:#9c9c9c;">Flexible Height</div>
<div class="t" style="left:982px;top:470px;letter-spacing:0.09px;color:#9c9c9c;">disabled</div>
<div class="t" style="left:1082px;top:470px;letter-spacing:0.14px;color:#9c9c9c;">none</div>
<div class="t" style="left:872px;top:496px;letter-spacing:0.21px;color:#9c9c9c;">Add a LayoutElement to override values.</div>
</div>
</body>
</html>
